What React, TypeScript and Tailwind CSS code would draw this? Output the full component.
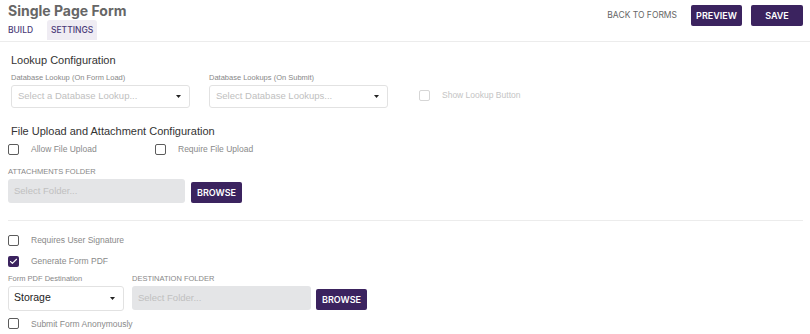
import { Check } from "lucide-react";

const purple = "bg-[#3b235f]";

function Box({ checked = false, disabled = false }: { checked?: boolean; disabled?: boolean }) {
  if (checked) {
    return (
      <span className={`flex h-[11px] w-[11px] items-center justify-center rounded-[2px] ${purple}`}>
        <Check className="h-[9px] w-[9px] text-white" strokeWidth={3} />
      </span>
    );
  }
  return (
    <span
      className={`block h-[11px] w-[11px] rounded-[2px] border-[1.5px] ${
        disabled ? "border-[#d6d6d6]" : "border-[#5c5c5c]"
      }`}
    />
  );
}

function CheckRow({ label, checked, disabled }: { label: string; checked?: boolean; disabled?: boolean }) {
  return (
    <div className="flex items-center">
      <Box checked={checked} disabled={disabled} />
      <span className={`ml-[12px] text-[8.5px] ${disabled ? "text-[#c4c4c4]" : "text-[#8a8a8a]"}`}>{label}</span>
    </div>
  );
}

function Caret() {
  return (
    <svg width="5" height="3" viewBox="0 0 5 3" className="shrink-0">
      <path d="M0 0h5L2.5 3z" fill="#222" />
    </svg>
  );
}

function Browse() {
  return (
    <button
      className={`${purple} h-[21px] w-[51px] rounded-[2px] text-[9px] font-semibold text-white`}
      style={{ fontFamily: "Inter, sans-serif" }}
    >
      BROWSE
    </button>
  );
}

export default function App() {
  return (
    <div className="min-h-screen bg-white text-[#333]" style={{ fontFamily: "'Liberation Sans', Arial, sans-serif" }}>
      {/* Header */}
      <div className="flex h-[42px] items-start justify-between border-b border-[#ececec] pl-[8px] pr-[7px]">
        <div style={{ fontFamily: "Inter, sans-serif" }}>
          <h1 className="mt-[1px] text-[14px] font-bold leading-[19px] text-[#666]">Single Page Form</h1>
          <div className="flex items-center text-[8.5px] font-medium text-[#4b3a78]">
            <span className="mr-[14px]">BUILD</span>
            <span className="flex h-[20px] w-[50px] items-center justify-center rounded-t-[3px] bg-[#efecf3]">
              SETTINGS
            </span>
          </div>
        </div>
        <div className="mt-[5px] flex items-center" style={{ fontFamily: "Inter, sans-serif" }}>
          <span className="mr-[14px] text-[8.5px] text-[#666]">BACK TO FORMS</span>
          <button className={`${purple} mr-[9px] h-[21px] w-[51px] rounded-[2px] text-[9px] font-semibold text-white`}>
            PREVIEW
          </button>
          <button className={`${purple} h-[21px] w-[52px] rounded-[2px] text-[9px] font-semibold text-white`}>SAVE</button>
        </div>
      </div>

      {/* Lookup Configuration */}
      <div className="pl-[11px] pt-[10px]">
        <h2 className="text-[11px] leading-[16px] text-[#333]">Lookup Configuration</h2>
        <div className="mt-[5px] flex items-end">
          <div className="w-[179px]">
            <div className="mb-[3px] text-[7.5px] leading-[9px] text-[#888]">Database Lookup (On Form Load)</div>
            <div className="flex h-[23px] items-center justify-between rounded-[3px] border border-[#e2e2e2] pl-[6px] pr-[8px]">
              <span className="text-[9.5px] text-[#c0c0c0]">Select a Database Lookup...</span>
              <Caret />
            </div>
          </div>
          <div className="ml-[19px] w-[179px]">
            <div className="mb-[3px] text-[7.5px] leading-[9px] text-[#888]">Database Lookups (On Submit)</div>
            <div className="flex h-[23px] items-center justify-between rounded-[3px] border border-[#e2e2e2] pl-[6px] pr-[8px]">
              <span className="text-[9.5px] text-[#c0c0c0]">Select Database Lookups...</span>
              <Caret />
            </div>
          </div>
          <div className="mb-[6px] ml-[31px]">
            <CheckRow label="Show Lookup Button" disabled />
          </div>
        </div>
      </div>

      {/* File Upload */}
      <div className="pl-[8px] pr-[7px]">
        <h2 className="ml-[3px] mt-[15px] text-[11px] leading-[16px] text-[#333]">File Upload and Attachment Configuration</h2>
        <div className="mt-[4px] flex items-center">
          <div className="w-[147px]">
            <CheckRow label="Allow File Upload" />
          </div>
          <CheckRow label="Require File Upload" />
        </div>
        <div className="mt-[11px] text-[7.5px] leading-[9px] text-[#888]">ATTACHMENTS FOLDER</div>
        <div className="mt-[3px] flex items-start">
          <div className="flex h-[24px] w-[177px] items-center rounded-[3px] bg-[#e4e5e7] pl-[6px] text-[9.5px] text-[#c0c0c0]">
            Select Folder...
          </div>
          <div className="ml-[6px]">
            <Browse />
          </div>
        </div>
        <div className="mt-[17px] border-t border-[#ececec]" />

        <div className="mt-[13px] flex flex-col gap-[8px]">
          <CheckRow label="Requires User Signature" />
          <CheckRow label="Generate Form PDF" checked />
        </div>
        <div className="mt-[6px] flex items-start">
          <div className="w-[116px]">
            <div className="mb-[3px] text-[7.5px] leading-[9px] text-[#888]">Form PDF Destination</div>
            <div className="flex h-[25px] items-center justify-between rounded-[3px] border border-[#e2e2e2] pl-[5px] pr-[8px]">
              <span className="text-[10.5px] text-[#222]">Storage</span>
              <Caret />
            </div>
          </div>
          <div className="ml-[8px]">
            <div className="mb-[3px] text-[7.5px] leading-[9px] text-[#888]">DESTINATION FOLDER</div>
            <div className="flex items-center">
              <div className="flex h-[24px] w-[179px] items-center rounded-[3px] bg-[#e4e5e7] pl-[6px] text-[9.5px] text-[#c0c0c0]">
                Select Folder...
              </div>
              <div className="ml-[5px]">
                <Browse />
              </div>
            </div>
          </div>
        </div>
        <div className="mt-[7px]">
          <CheckRow label="Submit Form Anonymously" />
        </div>
      </div>
    </div>
  );
}
